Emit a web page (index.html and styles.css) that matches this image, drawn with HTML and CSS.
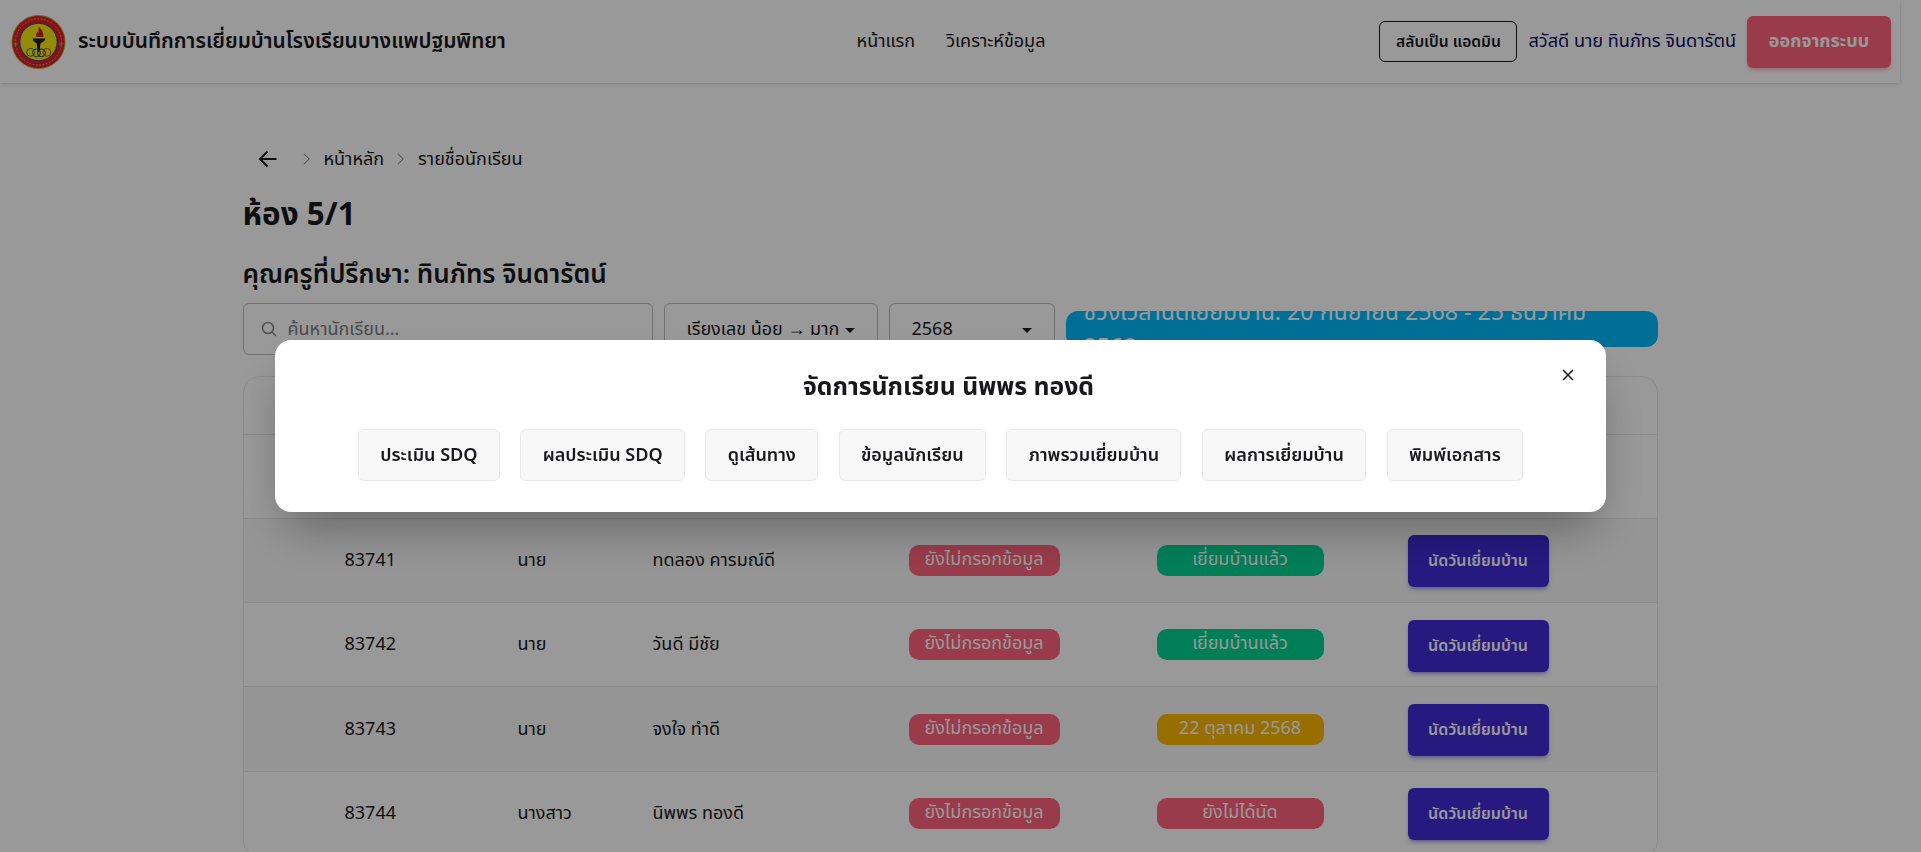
FILE: index.html
```html
<!DOCTYPE html>
<html lang="th">
<head>
<meta charset="utf-8">
<title>ระบบบันทึกการเยี่ยมบ้าน</title>
<link rel="stylesheet" href="styles.css">
</head>
<body>
<div class="app">
  <header class="navbar">
    <div class="nav-start">
      <svg class="logo" viewBox="0 0 56 56" aria-hidden="true">
        <circle cx="28" cy="28" r="27.5" fill="#c99a2e"/>
        <circle cx="28" cy="28" r="26.5" fill="#d8202c"/>
        <circle cx="28" cy="28" r="23.500" fill="none" stroke="#f2c94c" stroke-width=".7" stroke-dasharray="2 1.4"/>
        <circle cx="28" cy="28" r="19" fill="#f4e60f" stroke="#3a3f9a" stroke-width="1"/>
        <path d="M28.500 12.500c3 3 5 6.500 4.400 10.500h-7c-.9-2.500 .2-4.500 1.400-6 .2 1 .5 1.400 1 1.600-.5-2-.5-4 .2-6.100z" fill="#c8202c"/>
        <path d="M22 24.500h13l-1.200 2.500-3.800 2.500-1 9h-1.800l-1-9-3.300-2.500z" fill="#15163f"/>
        <g fill="none" stroke-width="1">
          <circle cx="20" cy="38.500" r="4" stroke="#2f7d3b"/>
          <circle cx="26" cy="39" r="4" stroke="#2b3a8f"/>
          <circle cx="31" cy="39" r="4" stroke="#222"/>
          <circle cx="36.500" cy="38.500" r="4" stroke="#c8451f"/>
        </g>
        <path d="M2.500 30h4.500M4.750 27.750v4.500M49 30h4.500M51.250 27.750v4.500" stroke="#62d060" stroke-width="1"/>
      </svg>
      <span class="brand">ระบบบันทึกการเยี่ยมบ้านโรงเรียนบางแพปฐมพิทยา</span>
    </div>
    <nav class="nav-center">
      <a class="nav-link">หน้าแรก</a>
      <a class="nav-link">วิเคราะห์ข้อมูล</a>
    </nav>
    <div class="nav-end">
      <button class="btn-outline">สลับเป็น แอดมิน</button>
      <span class="greeting">สวัสดี นาย ทินภัทร จินดารัตน์</span>
      <button class="btn-logout">ออกจากระบบ</button>
    </div>
  </header>

  <main class="page">
    <div class="crumbs">
      <svg class="back" viewBox="0 0 20 20" aria-hidden="true"><path d="M18.500 10H2.500M9.500 2.500 2 10l7.500 7.500" fill="none" stroke="#18181b" stroke-width="2"/></svg>
      <svg class="chev" viewBox="0 0 8 14" aria-hidden="true"><path d="M1 1l6 6-6 6" fill="none" stroke="#888" stroke-width="1.200"/></svg>
      <span>หน้าหลัก</span>
      <svg class="chev" viewBox="0 0 8 14" aria-hidden="true"><path d="M1 1l6 6-6 6" fill="none" stroke="#888" stroke-width="1.200"/></svg>
      <span>รายชื่อนักเรียน</span>
    </div>
    <h1 class="room">ห้อง 5/1</h1>
    <h2 class="teacher">คุณครูที่ปรึกษา: ทินภัทร จินดารัตน์</h2>

    <div class="filters">
      <div class="search">
        <svg class="search-icon" viewBox="0 0 16 16" aria-hidden="true"><circle cx="7" cy="7" r="5.500" fill="none" stroke="#8a8a8a" stroke-width="1.600"/><path d="M11 11l4 4" stroke="#8a8a8a" stroke-width="1.600"/></svg>
        <span class="placeholder">ค้นหานักเรียน...</span>
      </div>
      <div class="select select-sort"><span>เรียงเลข น้อย → มาก</span><i class="caret"></i></div>
      <div class="select select-year"><span>2568</span><i class="caret"></i></div>
      <div class="period">ช่วงเวลานัดเยี่ยมบ้าน: 20 กันยายน 2568 - 25 ธันวาคม 2568</div>
    </div>

    <div class="table-card">
      <table class="students">
        <colgroup>
          <col class="c1"><col class="c2"><col class="c3"><col class="c4"><col class="c5"><col class="c6">
        </colgroup>
        <thead><tr><th></th><th></th><th></th><th></th><th></th><th></th></tr></thead>
        <tbody>
          <tr class="blank"><td></td><td></td><td></td><td></td><td></td><td></td></tr>
          <tr class="zebra">
            <td class="num">83741</td><td>นาย</td><td>ทดลอง คารมณ์ดี</td>
            <td><span class="badge red">ยังไม่กรอกข้อมูล</span></td>
            <td><span class="badge wide green">เยี่ยมบ้านแล้ว</span></td>
            <td><button class="btn-primary">นัดวันเยี่ยมบ้าน</button></td>
          </tr>
          <tr>
            <td class="num">83742</td><td>นาย</td><td>วันดี มีชัย</td>
            <td><span class="badge red">ยังไม่กรอกข้อมูล</span></td>
            <td><span class="badge wide green">เยี่ยมบ้านแล้ว</span></td>
            <td><button class="btn-primary">นัดวันเยี่ยมบ้าน</button></td>
          </tr>
          <tr class="zebra">
            <td class="num">83743</td><td>นาย</td><td>จงใจ ทำดี</td>
            <td><span class="badge red">ยังไม่กรอกข้อมูล</span></td>
            <td><span class="badge wide amber">22 ตุลาคม 2568</span></td>
            <td><button class="btn-primary">นัดวันเยี่ยมบ้าน</button></td>
          </tr>
          <tr>
            <td class="num">83744</td><td>นางสาว</td><td>นิพพร ทองดี</td>
            <td><span class="badge red">ยังไม่กรอกข้อมูล</span></td>
            <td><span class="badge wide red">ยังไม่ได้นัด</span></td>
            <td><button class="btn-primary">นัดวันเยี่ยมบ้าน</button></td>
          </tr>
        </tbody>
      </table>
    </div>
  </main>
</div>

<div class="backdrop">
  <section class="modal">
    <button class="close" aria-label="ปิด"><svg viewBox="0 0 14 14" aria-hidden="true"><path d="M2 2l10 10M12 2 2 12" fill="none" stroke="#18181b" stroke-width="1.500"/></svg></button>
    <h3 class="modal-title">จัดการนักเรียน นิพพร ทองดี</h3>
    <div class="actions">
      <button class="action">ประเมิน SDQ</button>
      <button class="action">ผลประเมิน SDQ</button>
      <button class="action">ดูเส้นทาง</button>
      <button class="action">ข้อมูลนักเรียน</button>
      <button class="action">ภาพรวมเยี่ยมบ้าน</button>
      <button class="action">ผลการเยี่ยมบ้าน</button>
      <button class="action">พิมพ์เอกสาร</button>
    </div>
  </section>
</div>
</body>
</html>
```
FILE: styles.css
```css
* { box-sizing: border-box; }
html, body { margin: 0; height: 100%; overflow: hidden; }
body {
  background: #fff;
  color: #18181b;
  font-family: "Noto Sans Thai", "Noto Sans", sans-serif;
  font-size: 18px;
}
button { font-family: inherit; cursor: pointer; }

.app { width: 1900px; }

.navbar {
  height: 83px;
  padding: 0 9px 0 11px;
  display: grid;
  grid-template-columns: 1fr auto 1fr;
  align-items: center;
  background: #fff;
  box-shadow: 0 1px 3px rgba(0, 0, 0, .18);
}
.nav-start { display: flex; align-items: center; gap: 12px; }
.logo { width: 55px; height: 56px; flex: none; margin-top: 1px; }
.brand { font-size: 20.8px; font-weight: 600; white-space: nowrap; }
.nav-center { display: flex; gap: 31px; }
.nav-end { display: flex; align-items: center; justify-content: flex-end; gap: 11px; }
.btn-outline {
  width: 138px;
  height: 41px;
  padding: 0;
  background: transparent;
  border: 1px solid #18181b;
  border-radius: 6px;
  color: #18181b;
  font-size: 15.6px;
  font-weight: 600;
  white-space: nowrap;
}
.greeting { color: #0b0b5c; white-space: nowrap; font-size: 18.1px; }
.btn-logout {
  width: 144px;
  height: 52px;
  background: #ff637d;
  border: 0;
  border-radius: 6px;
  color: #fff;
  font-size: 18px;
  font-weight: 700;
  box-shadow: 0 3px 4px -1px rgba(255, 99, 125, .5);
}

.page { width: 1415px; margin: 0 auto; padding-top: 62px; }
.crumbs { height: 28px; display: flex; align-items: center; padding-left: 15px; }
.back { width: 20px; height: 20px; margin-right: 25px; }
.chev { width: 7px; height: 12px; margin-right: 14px; }
.crumbs span { margin-right: 13px; }
.room { margin: 21px 0 0; font-size: 31.4px; font-weight: 700; line-height: 44px; }
.teacher { margin: 19px 0 0; font-size: 26px; font-weight: 600; line-height: 36px; }

.filters { display: flex; align-items: flex-start; gap: 11px; margin-top: 10px; }
.search, .select {
  height: 52px;
  display: flex;
  align-items: center;
  border: 1px solid #bdbdbd;
  border-radius: 6px;
  background: #fff;
}
.search { width: 410px; padding-left: 17px; gap: 11px; }
.search-icon { width: 16px; height: 16px; flex: none; }
.placeholder { color: #7c7c80; }
.select { padding: 0 22px; justify-content: space-between; white-space: nowrap; }
.select-sort { width: 214px; }
.select-year { width: 166px; }
.caret {
  width: 0;
  height: 0;
  border-left: 5px solid transparent;
  border-right: 5px solid transparent;
  border-top: 5px solid #18181b;
  margin-top: 3px;
}
.period {
  flex: 1;
  height: 36px;
  margin-top: 8px;
  padding: 3px 18px 0;
  display: flex;
  align-items: center;
  overflow: hidden;
  background: #00bafe;
  border-radius: 12px;
  color: #fff;
  font-size: 23.2px;
  line-height: 1.5;
}

.table-card {
  margin-top: 21px;
  border: 1px solid #e8e8e8;
  border-radius: 16px;
  overflow: hidden;
}
.students { width: 100%; border-collapse: collapse; table-layout: fixed; }
.c1 { width: 258px; }
.c2 { width: 135px; }
.c3 { width: 256px; }
.c4 { width: 248px; }
.c5 { width: 251px; }
.students th { height: 57px; border-bottom: 1px solid #e8e8e8; }
.students td {
  height: 84.33px;
  padding: 0 0 0 16px;
  border-bottom: 1px solid #e8e8e8;
  vertical-align: middle;
}
.students td.num { padding-left: 101px; }
.zebra { background: #f8f8f8; }
.badge {
  display: inline-block;
  height: 31px;
  padding: 0 16px;
  border-radius: 10px;
  color: #fff;
  font-size: 18px;
  line-height: 30px;
  text-align: center;
  white-space: nowrap;
  vertical-align: middle;
}
.wide { width: 167px; padding: 0; }
.red { background: #ff637d; }
.green { background: #00d390; }
.amber { background: #fcb700; }
.btn-primary {
  display: block;
  width: 141px;
  height: 52px;
  margin-top: 2px;
  padding: 0;
  background: #422ad5;
  border: 0;
  border-radius: 6px;
  color: #fff;
  font-size: 16px;
  font-weight: 600;
  box-shadow: 0 3px 4px -1px rgba(66, 42, 213, .5);
}

.backdrop {
  position: fixed;
  inset: 0;
  padding-right: 40px;
  display: grid;
  place-items: center;
  background: rgba(0, 0, 0, .4);
}
.modal {
  position: relative;
  width: 1331px;
  height: 172px;
  padding-top: 24px;
  background: #fff;
  border-radius: 16px;
  box-shadow: 0 25px 50px -12px rgba(0, 0, 0, .35);
}
.modal-title { margin: 0; padding-left: 16px; font-size: 24.8px; font-weight: 700; line-height: 48px; text-align: center; }
.close {
  position: absolute;
  top: 27px;
  right: 30px;
  width: 16px;
  height: 16px;
  padding: 1px;
  background: none;
  border: 0;
}
.close svg { display: block; width: 14px; height: 14px; }
.actions { display: flex; justify-content: center; gap: 20.5px; margin-top: 17px; }
.action {
  height: 52px;
  padding: 0 21.3px;
  background: #f8f8f8;
  border: 1px solid #e9e9e9;
  border-radius: 6px;
  color: #18181b;
  font-size: 18px;
  font-weight: 600;
  white-space: nowrap;
}
```
